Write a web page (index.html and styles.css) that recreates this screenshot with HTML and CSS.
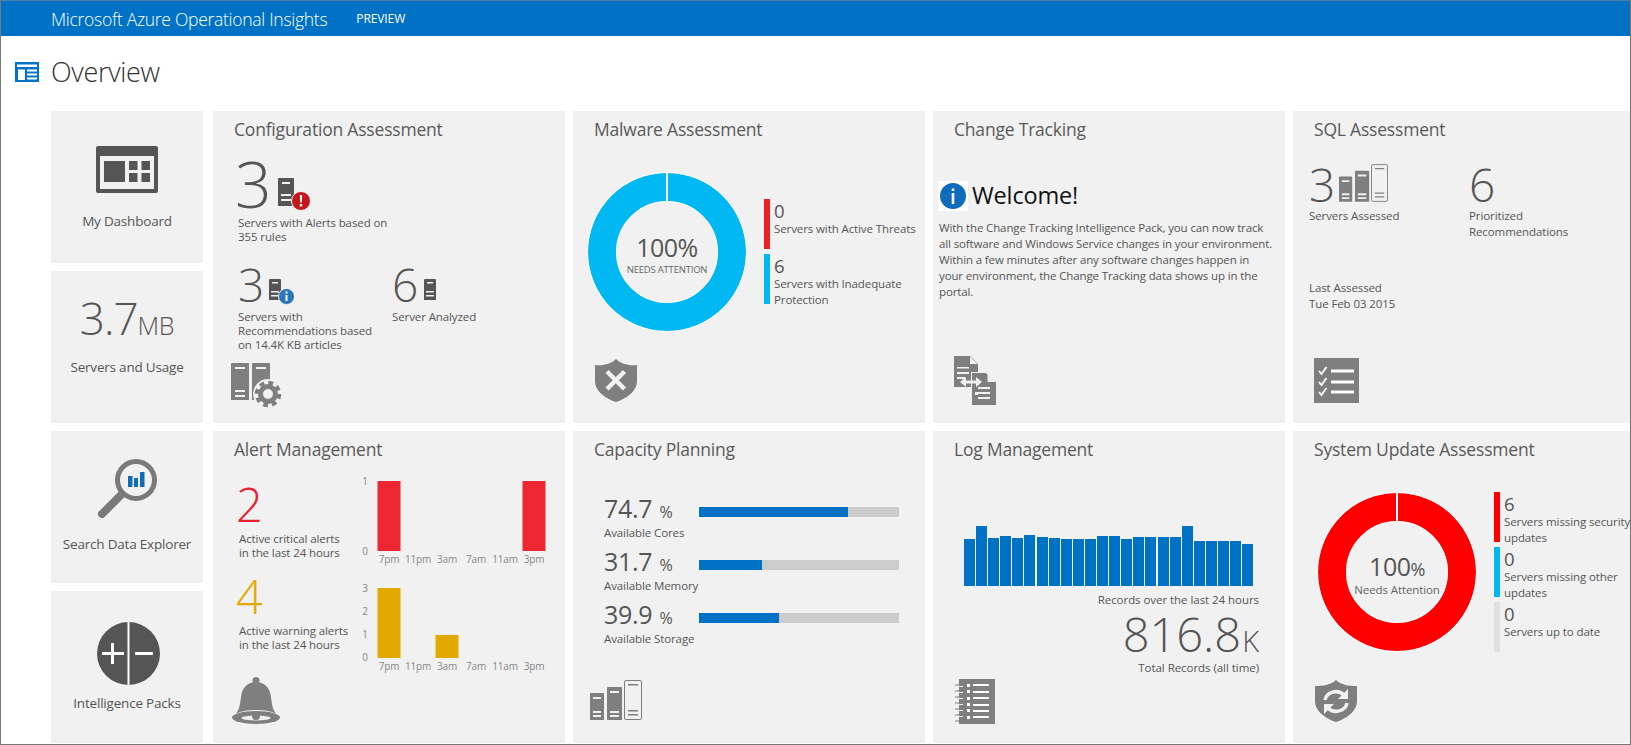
FILE: index.html
```html
<!DOCTYPE html>
<html lang="en">
<head>
<meta charset="utf-8">
<title>Microsoft Azure Operational Insights</title>
<link rel="stylesheet" href="styles.css">
</head>
<body>
<svg class="defs" width="0" height="0" aria-hidden="true">
  <symbol id="racks" viewBox="0 0 52 40">
    <path class="g" d="M1 13h12a1 1 0 011 1v26H0V14a1 1 0 011-1zM18 7h13a1 1 0 011 1v32H17V8a1 1 0 011-1z"/>
    <path class="w" d="M3 17h8v2H3zM3 31h8v2H3zM3 35h8v2H3zM20 11h9v2h-9zM20 31h9v2h-9zM20 35h9v2h-9z"/>
    <rect x="34.5" y=".5" width="17" height="39" rx="1.5" fill="none" stroke="#7f7f7f"/>
    <path class="g" d="M38 4h10v1.5H38zM38 30h10v1.5H38zM38 34h10v1.5H38z"/>
  </symbol>
</svg>
<div class="window">
  <header class="topbar">
    <span class="brand">Microsoft Azure Operational Insights</span>
    <span class="preview">PREVIEW</span>
  </header>
  <div class="page-head">
    <svg class="page-icon" width="24" height="20" viewBox="0 0 24 20">
      <path fill="#0072c6" d="M0 0h24v20H0z"/>
      <path fill="#fff" d="M2 2.500h20V5H2zM3 7.500h7V18H3zM12 7.500h10v2H12zM12 11.500h10v2H12zM12 15.500h10v2H12z"/>
    </svg>
    <h1 class="page-title">Overview</h1>
  </div>
  <main class="board">
    <div class="side">
      <a class="nav-tile nav-dash">
        <svg width="62" height="47" viewBox="0 0 62 47">
          <rect width="62" height="47" rx="2" fill="#555"/>
          <path fill="#f1f1f1" d="M4 10h54v33H4z"/>
          <path fill="#555" d="M8 15h21v21H8zM33 15h8.500v9H33zM45.500 15H54v9h-8.500zM33 27h8.500v9H33zM45.500 27H54v9h-8.500z"/>
        </svg>
        <span class="nav-label dash-label">My Dashboard</span>
      </a>
      <a class="nav-tile nav-usage">
        <span class="usage"><span class="usage-num">3.7</span><span class="usage-unit">MB</span></span>
        <span class="nav-label usage-label">Servers and Usage</span>
      </a>
    </div>
    <section class="tile">
      <h2 class="tile-title">Configuration Assessment</h2>
      <div class="cfg-top">
        <span class="num-xl">3</span>
        <svg class="cfg-badge-lg" width="32" height="33" viewBox="0 0 32 33">
          <path fill="#555" d="M1 0h14a1 1 0 011 1v27H0V1a1 1 0 011-1z"/>
          <path fill="#f1f1f1" d="M4 4h8v2H4zM3 16h10v2H3zM3 21h10v2H3z"/>
          <circle cx="23" cy="23" r="9.500" fill="#c4161c" stroke="#f1f1f1"/>
          <path fill="#fff" d="M21.800 17h2.400l-.4 7.500h-1.600zM21.800 26h2.400v2.400h-2.400z"/>
        </svg>
      </div>
      <p class="desc cfg-desc">Servers with Alerts based on<br>355 rules</p>
      <div class="cfg-row">
        <div class="cfg-col">
          <div class="cfg-stat">
            <span class="num-lg">3</span>
            <svg class="cfg-badge-sm" width="26" height="26" viewBox="0 0 26 26">
              <path fill="#555" d="M1 0h10a1 1 0 011 1v20H0V1a1 1 0 011-1z"/>
              <path fill="#f1f1f1" d="M3 3h6v1.500H3zM2 12h8v1.500H2zM2 16h8v1.500H2z"/>
              <circle cx="17.500" cy="17.500" r="8" fill="#2a75bb" stroke="#f1f1f1"/>
              <path fill="#fff" d="M16.500 12.500h2v2h-2zM16.500 16h2v6h-2z"/>
            </svg>
          </div>
          <p class="desc">Servers with<br>Recommendations based<br>on 14.4K KB articles</p>
        </div>
        <div class="cfg-col-b">
          <div class="cfg-stat">
            <span class="num-lg">6</span>
            <svg class="cfg-badge-plain" width="12" height="21" viewBox="0 0 12 21">
              <path fill="#555" d="M1 0h10a1 1 0 011 1v20H0V1a1 1 0 011-1z"/>
              <path fill="#f1f1f1" d="M3 3h6v1.500H3zM2 12h8v1.500H2zM2 16h8v1.500H2z"/>
            </svg>
          </div>
          <p class="desc">Server Analyzed</p>
        </div>
      </div>
      <svg class="tile-icon ic-config" width="54" height="45" viewBox="0 0 54 45">
        <path fill="#7f7f7f" d="M1 0h16a1 1 0 011 1v36H0V1a1 1 0 011-1zM22 0h16a1 1 0 011 1v36H21V1a1 1 0 011-1z"/>
        <path fill="#f1f1f1" d="M4 4h10v2H4zM25 4h10v2H25zM4 27h10v2H4zM4 32h10v2H4z"/>
        <circle cx="37" cy="31" r="15" fill="#f1f1f1"/>
        <circle cx="37" cy="31" r="11" fill="none" stroke="#7f7f7f" stroke-width="4.500" stroke-dasharray="4.640 4"/>
        <circle cx="37" cy="31" r="7.500" fill="none" stroke="#7f7f7f" stroke-width="5"/>
      </svg>
    </section>
    <section class="tile">
      <h2 class="tile-title">Malware Assessment</h2>
      <div class="donut-row">
        <div class="donut">
          <svg class="donut-ring" width="160" height="160" viewBox="0 0 160 160">
            <circle cx="80" cy="80" r="65" fill="none" stroke="#00b9f2" stroke-width="28"/>
            <circle cx="80" cy="80" r="79.500" fill="none" stroke="#fff" stroke-opacity=".7"/>
            <circle cx="80" cy="80" r="50.500" fill="none" stroke="#fff" stroke-opacity=".7"/>
            <rect x="79" y="0" width="2" height="30" fill="#fff"/>
          </svg>
          <div class="donut-text">
            <span class="donut-num">100%</span>
            <span class="donut-caps">NEEDS ATTENTION</span>
          </div>
        </div>
        <div class="legend legend-malware">
          <div class="leg-item"><i class="leg-bar bar-red"></i><div class="leg-text"><span class="leg-num">0</span><span class="leg-label">Servers with Active Threats</span></div></div>
          <div class="leg-item"><i class="leg-bar bar-cyan"></i><div class="leg-text"><span class="leg-num">6</span><span class="leg-label">Servers with Inadequate<br>Protection</span></div></div>
        </div>
      </div>
      <svg class="tile-icon ic-shield" width="42" height="43" viewBox="0 0 42 43">
        <path fill="#7f7f7f" d="M21 0C16 5 8 7 0 6v16c0 11 12 18 21 21 9-3 21-10 21-21V6c-8 1-16-1-21-6z"/>
        <path stroke="#f1f1f1" stroke-width="4.500" d="M12 12.500l17.500 17.500M29.500 12.500L12 30"/>
      </svg>
    </section>
    <section class="tile">
      <h2 class="tile-title">Change Tracking</h2>
      <div class="welcome">
        <span class="info-box">
          <svg width="26" height="26" viewBox="0 0 26 26">
            <circle cx="13" cy="13" r="13" fill="#0f6cbd"/>
            <path fill="#fff" d="M11.700 5.500h2.600v2.600h-2.600zM11.700 10h2.600v11h-2.600z"/>
          </svg>
        </span>
        <span class="welcome-text">Welcome!</span>
      </div>
      <p class="para">With the Change Tracking Intelligence Pack, you can now track<br>all software and Windows Service changes in your environment.<br>Within a few minutes after any software changes happen in<br>your environment, the Change Tracking data shows up in the<br>portal.</p>
      <svg class="tile-icon ic-docs" width="43" height="49" viewBox="0 0 43 49">
        <path fill="#7f7f7f" d="M0 0h16l8 8v23H0z"/>
        <path fill="#f1f1f1" d="M16 .500v7.500h7.500z"/>
        <path fill="#f1f1f1" d="M3 11h12v1.500H3zM3 16h12v2H3zM3 21h8v2H3z"/>
        <path fill="#f1f1f1" d="M17 16h15l11 10v23H17z"/>
        <path fill="#7f7f7f" d="M18 17h14l10 9v23H18z"/>
        <path fill="#f1f1f1" d="M33.500 17.500V26h8.500z"/>
        <path fill="#f1f1f1" d="M24 31h12v2H24zM21 36h3v3h-3zM24 36h12v2H24zM24 41h12v2H24z"/>
        <path fill="#f1f1f1" d="M6 26l6-5v3.500h10V21l6 5-6 5v-3.500H12V31z"/>
      </svg>
    </section>
    <section class="tile">
      <h2 class="tile-title">SQL Assessment</h2>
      <div class="sql-grid">
        <div class="sql-cell">
          <div class="sql-stat">
            <span class="num-lg">3</span>
            <svg class="sql-racks" width="49" height="38"><use href="#racks"/></svg>
          </div>
          <p class="desc16">Servers Assessed</p>
        </div>
        <div class="sql-cell">
          <div class="sql-stat"><span class="num-lg">6</span></div>
          <p class="desc16">Prioritized<br>Recommendations</p>
        </div>
      </div>
      <p class="desc16 sql-last">Last Assessed<br>Tue Feb 03 2015</p>
      <svg class="tile-icon ic-check" width="45" height="45" viewBox="0 0 45 45">
        <path fill="#7f7f7f" d="M0 0h45v45H0z"/>
        <path fill="#fff" d="M17 11.500h23v3H17zM17 22.500h23v3H17zM17 32.500h23v3H17z"/>
        <path fill="none" stroke="#fff" stroke-width="1.800" d="M5 13l2.500 3L12.500 9M5 24l2.500 3 5-7M5 34l2.500 3 5-7"/>
      </svg>
    </section>

    <div class="side">
      <a class="nav-tile nav-search">
        <svg width="60" height="60" viewBox="0 0 60 60">
          <circle cx="39" cy="21" r="18.500" fill="#f1f1f1" stroke="#7a7a7a" stroke-width="5"/>
          <path stroke="#7a7a7a" stroke-width="8" stroke-linecap="round" d="M24 36L5 55"/>
          <path fill="#0f6cb5" d="M31 17h4.500v11H31zM37 19h4v9h-4zM43 13h4.500v15H43z"/>
        </svg>
        <span class="nav-label search-label">Search Data Explorer</span>
      </a>
      <a class="nav-tile nav-packs">
        <svg class="packs-icon" width="63" height="63" viewBox="0 0 63 63">
          <circle cx="31.500" cy="31.500" r="31.500" fill="#555"/>
          <path fill="#fff" d="M30.500 0h2v63h-2zM14 21h3v9h10v3H17v9h-3V33H5v-3h9zM38 30h18v3H38z"/>
        </svg>
        <span class="nav-label packs-label">Intelligence Packs</span>
      </a>
    </div>
    <section class="tile">
      <h2 class="tile-title">Alert Management</h2>
      <div class="alert-row alert-row-a">
        <div class="alert-stat alert-stat-a">
          <span class="num-alert red">2</span>
          <p class="desc alert-desc">Active critical alerts<br>in the last 24 hours</p>
        </div>
        <svg class="chart" width="192" height="94" viewBox="0 0 192 94">
          <g class="ax">
            <text x="5" y="11">1</text><text x="5" y="81">0</text>
            <text x="29" y="89">7pm</text><text x="58" y="89">11pm</text><text x="87" y="89">3am</text><text x="116" y="89">7am</text><text x="145" y="89">11am</text><text x="174" y="89">3pm</text>
          </g>
          <rect x="17.500" y="7" width="23" height="70" fill="#ee2733"/>
          <rect x="162.500" y="7" width="23" height="70" fill="#ee2733"/>
        </svg>
      </div>
      <div class="alert-row alert-row-b">
        <div class="alert-stat">
          <span class="num-alert amber">4</span>
          <p class="desc alert-desc">Active warning alerts<br>in the last 24 hours</p>
        </div>
        <svg class="chart" width="192" height="100" viewBox="0 0 192 100">
          <g class="ax">
            <text x="5" y="18">3</text><text x="5" y="41">2</text><text x="5" y="64">1</text><text x="5" y="87">0</text>
            <text x="29" y="96">7pm</text><text x="58" y="96">11pm</text><text x="87" y="96">3am</text><text x="116" y="96">7am</text><text x="145" y="96">11am</text><text x="174" y="96">3pm</text>
          </g>
          <rect x="17.500" y="14" width="23" height="70" fill="#e2a900"/>
          <rect x="75.500" y="61" width="23" height="23" fill="#e2a900"/>
        </svg>
      </div>
      <svg class="tile-icon ic-bell" width="48" height="47" viewBox="0 0 48 47">
        <ellipse cx="24" cy="40.500" rx="24" ry="6.500" fill="#7f7f7f"/>
        <ellipse cx="24" cy="41" rx="14.500" ry="2.500" fill="#f1f1f1"/>
        <circle cx="24" cy="3.500" r="3.500" fill="#7f7f7f"/>
        <path fill="#7f7f7f" d="M24 5c-8 0-13 5-14.500 12-1.500 8-1 14-5.500 19.500 5-2.500 12-3.500 20-3.500s15 1 20 3.500C39.500 31 40 25 38.500 17 37 10 32 5 24 5z"/>
        <circle cx="24" cy="39" r="4" fill="#7f7f7f"/>
      </svg>
    </section>
    <section class="tile">
      <h2 class="tile-title">Capacity Planning</h2>
      <div class="capacity">
        <div class="cap-row">
          <div class="cap-text"><span class="cap-val"><span class="cap-num">74.7</span> <span class="cap-pct">%</span></span><span class="cap-label">Available Cores</span></div>
          <div class="track"><div class="fill" style="width:74.7%"></div></div>
        </div>
        <div class="cap-row">
          <div class="cap-text"><span class="cap-val"><span class="cap-num">31.7</span> <span class="cap-pct">%</span></span><span class="cap-label">Available Memory</span></div>
          <div class="track"><div class="fill" style="width:31.7%"></div></div>
        </div>
        <div class="cap-row">
          <div class="cap-text"><span class="cap-val"><span class="cap-num">39.9</span> <span class="cap-pct">%</span></span><span class="cap-label">Available Storage</span></div>
          <div class="track"><div class="fill" style="width:39.9%"></div></div>
        </div>
      </div>
      <svg class="tile-icon ic-racks" width="52" height="40"><use href="#racks"/></svg>
    </section>
    <section class="tile">
      <h2 class="tile-title">Log Management</h2>
      <div class="log-chart">
        <i class="log-bar" style="height:47px"></i><i class="log-bar" style="height:60px"></i><i class="log-bar" style="height:48px"></i><i class="log-bar" style="height:50px"></i><i class="log-bar" style="height:48px"></i><i class="log-bar" style="height:51px"></i><i class="log-bar" style="height:49px"></i><i class="log-bar" style="height:48px"></i><i class="log-bar" style="height:47px"></i><i class="log-bar" style="height:47px"></i><i class="log-bar" style="height:47px"></i><i class="log-bar" style="height:50px"></i><i class="log-bar" style="height:50px"></i><i class="log-bar" style="height:47px"></i><i class="log-bar" style="height:49px"></i><i class="log-bar" style="height:49px"></i><i class="log-bar" style="height:49px"></i><i class="log-bar" style="height:49px"></i><i class="log-bar" style="height:60px"></i><i class="log-bar" style="height:45px"></i><i class="log-bar" style="height:45px"></i><i class="log-bar" style="height:45px"></i><i class="log-bar" style="height:45px"></i><i class="log-bar" style="height:42px"></i>
      </div>
      <div class="log-info">
        <span class="log-cap">Records over the last 24 hours</span>
        <span class="log-total"><span class="log-num">816.8</span><span class="log-unit">K</span></span>
        <span class="log-cap log-cap-b">Total Records (all time)</span>
      </div>
      <svg class="tile-icon ic-notes" width="40" height="45" viewBox="0 0 40 45">
        <path fill="#7f7f7f" d="M4 0h36v45H4z"/>
        <path fill="#fff" d="M12 5h3v3h-3zM18 5h16v2H18zM12 11h3v3h-3zM18 12h16v2H18zM12 18h3v3h-3zM18 18h16v2H18zM12 24h3v3h-3zM18 25h16v2H18zM12 30h3v3h-3zM18 31h16v2H18zM12 37h3v3h-3zM18 37h16v2H18z"/>
        <path fill="none" stroke="#7f7f7f" stroke-width="1.200" d="M0 6h7M0 12h7M0 18h7M0 24h7M0 30h7M0 36h7M0 42h7"/>
        <path fill="none" stroke="#f1f1f1" stroke-width="1" d="M4 7.500h4M4 13.500h4M4 19.500h4M4 25.500h4M4 31.500h4M4 37.500h4"/>
      </svg>
    </section>
    <section class="tile">
      <h2 class="tile-title">System Update Assessment</h2>
      <div class="donut-row">
        <div class="donut donut-update">
          <svg class="donut-ring" width="160" height="160" viewBox="0 0 160 160">
            <circle cx="80" cy="80" r="65" fill="none" stroke="#f00" stroke-width="28"/>
            <circle cx="80" cy="80" r="79.500" fill="none" stroke="#fff" stroke-opacity=".7"/>
            <circle cx="80" cy="80" r="50.500" fill="none" stroke="#fff" stroke-opacity=".7"/>
            <rect x="79" y="0" width="2" height="30" fill="#fff"/>
          </svg>
          <div class="donut-text donut-text-up">
            <span class="donut-num">100<small class="donut-pct">%</small></span>
            <span class="donut-sub">Needs Attention</span>
          </div>
        </div>
        <div class="legend">
          <div class="leg-item"><i class="leg-bar bar-pure"></i><div class="leg-text"><span class="leg-num">6</span><span class="leg-label">Servers missing security<br>updates</span></div></div>
          <div class="leg-item"><i class="leg-bar bar-cyan"></i><div class="leg-text"><span class="leg-num">0</span><span class="leg-label">Servers missing other<br>updates</span></div></div>
          <div class="leg-item"><i class="leg-bar bar-grey"></i><div class="leg-text"><span class="leg-num">0</span><span class="leg-label">Servers up to date</span></div></div>
        </div>
      </div>
      <svg class="tile-icon ic-update" width="42" height="42" viewBox="0 0 42 42">
        <path fill="#7f7f7f" d="M21 0C16 5 8 6 0 6v15c0 11 12 18 21 21 9-3 21-10 21-21V6c-8 0-16-1-21-6z"/>
        <path fill="none" stroke="#f1f1f1" stroke-width="3.500" d="M10 20a11 10 0 0119-5M32 23a11 10 0 01-19 5"/>
        <path fill="#f1f1f1" d="M33 9v10h-10zM9 34V24h10z"/>
      </svg>
    </section>
  </main>
</div>
</body>
</html>
```
FILE: styles.css
```css
* { box-sizing: border-box; }
html, body { margin: 0; padding: 0; height: 100%; overflow: hidden; background: #fff; }
body { font-family: "Open Sans", "Noto Sans", "Liberation Sans", sans-serif; color: #555; }
.defs { position: absolute; }
.g { fill: #7f7f7f; }
.w { fill: #f1f1f1; }
.window {
  width: 1631px; height: 745px; overflow: hidden;
  border: 1px solid #777; border-top-color: #4f7ea8; background: #fff;
}
.topbar {
  height: 35px; background: #0072c6; color: #fff;
  display: flex; align-items: center; padding-left: 50px;
}
.brand { font-size: 17.500px; font-weight: 300; letter-spacing: -.28px; }
.preview { font-size: 12px; margin-left: 29px; letter-spacing: -.1px; }
.page-head { display: flex; align-items: center; height: 36px; margin-top: 18px; padding-left: 14px; }
.page-icon { flex: none; }
.page-title { margin: 0 0 0 12px; font-size: 27px; font-weight: 300; color: #333; line-height: 36px; letter-spacing: -.3px; }
.board {
  display: grid; grid-template-columns: 154px repeat(4, 352px);
  grid-auto-rows: 312px; column-gap: 8px; row-gap: 8px;
  margin: 21px 0 0 50px; width: 1640px;
}
.side { display: flex; flex-direction: column; gap: 8px; width: 152px; }
.nav-tile { height: 152px; background: #f1f1f1; display: flex; flex-direction: column; align-items: center; }
.nav-label { font-size: 13.5px; line-height: 20px; color: #555; letter-spacing: -.2px; }
.nav-dash { padding-top: 35px; }
.dash-label { margin-top: 18px; }
.nav-usage { padding-top: 22px; }
.usage { line-height: 50px; height: 50px; display: flex; align-items: baseline; font-weight: 300; }
.usage-num { font-size: 44px; letter-spacing: -1px; }
.usage-unit { font-size: 25px; margin-left: 0; letter-spacing: -.3px; }
.usage-label { margin-top: 14px; }
.nav-search { padding-top: 28px; }
.search-label { margin-top: 15px; }
.nav-packs { padding-top: 31px; }
.packs-icon { margin-left: 3px; }
.packs-label { margin-top: 8px; }

.tile { background: #f1f1f1; display: flex; flex-direction: column; min-width: 0; overflow: hidden; }
.tile-title { margin: 6px 0 1px 21px; font-size: 17.500px; font-weight: 400; line-height: 24px; color: #5a5a5a; letter-spacing: -.2px; white-space: nowrap; }
.tile-icon { margin-top: auto; flex: none; }
.desc { margin: 0; font-size: 11.5px; line-height: 14px; color: #555; white-space: nowrap; letter-spacing: -.1px; }
.desc16 { margin: 0; font-size: 11.5px; line-height: 16px; color: #555; white-space: nowrap; letter-spacing: -.1px; }

.cfg-top { display: flex; height: 62px; margin: 12px 0 0 22px; }
.num-xl { font-size: 64px; line-height: 60px; font-weight: 300; }
.cfg-badge-lg { margin: 24px 0 0 6px; }
.cfg-desc { margin-left: 25px; }
.cfg-row { display: flex; margin: 18px 0 0 25px; }
.cfg-col { width: 154px; }
.cfg-stat { display: flex; height: 44px; margin-bottom: 4px; }
.num-lg { font-size: 46px; line-height: 44px; font-weight: 300; }
.cfg-badge-sm { margin: 17px 0 0 5px; }
.cfg-badge-plain { margin: 17px 0 0 6px; }
.ic-config { margin-left: 18px; margin-bottom: 15px; }

.donut-row { display: flex; align-items: flex-start; margin-top: 30px; }
.donut { display: grid; width: 160px; height: 160px; margin-left: 14px; flex: none; }
.donut-update { margin-left: 24px; }
.donut-ring, .donut-text { grid-area: 1 / 1; }
.donut-text { display: flex; flex-direction: column; align-items: center; padding-top: 60px; }
.donut-text-up { padding-top: 59px; }
.donut-num { font-size: 25px; line-height: 30px; color: #555; font-weight: 400; letter-spacing: -.5px; }
.donut-caps { font-size: 9.5px; line-height: 14px; margin-top: 1px; letter-spacing: -.2px; color: #666; }
.donut-pct { font-size: 18px; }
.donut-sub { font-size: 11.5px; line-height: 14px; margin-top: -1px; color: #666; letter-spacing: -.1px; }
.legend { display: flex; flex-direction: column; gap: 5px; margin-left: 17px; }
.legend-malware { margin-top: 27px; }
.leg-item { display: flex; height: 50px; }
.leg-bar { display: block; width: 6px; height: 50px; flex: none; }
.bar-red { background: #ed2024; }
.bar-cyan { background: #00b9f2; }
.bar-pure { background: #f00; }
.bar-grey { background: #e0e0e0; }
.leg-text { margin-left: 4px; padding-top: 2px; white-space: nowrap; }
.leg-num { display: block; font-size: 18.500px; line-height: 20px; color: #555; }
.leg-label { display: block; font-size: 11.5px; line-height: 16px; color: #555; letter-spacing: -.1px; }
.ic-shield { margin-left: 22px; margin-bottom: 21px; }

.welcome { display: flex; align-items: center; margin: 39px 0 0 5px; height: 30px; }
.info-box { width: 30px; height: 30px; background: #fff; display: flex; align-items: center; justify-content: center; }
.welcome-text { font-size: 23.500px; line-height: 26px; margin-left: 4px; margin-bottom: 3px; color: #111; letter-spacing: -.15px; }
.para { margin: 9px 0 0 6px; font-size: 11.5px; line-height: 16px; color: #555; white-space: nowrap; letter-spacing: -.13px; }
.ic-docs { margin-left: 21px; margin-bottom: 18px; }

.sql-grid { display: grid; grid-template-columns: 160px 1fr; margin: 20px 0 0 16px; }
.sql-stat { display: flex; height: 44px; margin-bottom: 2px; }
.sql-racks { margin: 2px 0 0 4px; }
.sql-last { margin: 40px 0 0 16px; }
.ic-check { margin-left: 21px; margin-bottom: 20px; }

.alert-row { display: flex; }
.alert-row-a { margin-top: 12px; height: 94px; }
.alert-row-b { margin-top: 6px; height: 100px; }
.alert-stat { width: 147px; padding-left: 26px; flex: none; }
.alert-stat-a { padding-top: 8px; }
.num-alert { display: block; font-size: 47px; line-height: 44px; font-weight: 300; margin-left: -3px; }
.red { color: #e8212e; }
.amber { color: #e2a900; }
.alert-desc { margin-top: 6px; }
.chart { flex: none; }
.ax text { font-size: 10px; fill: #888; text-anchor: middle; letter-spacing: -.2px; }
.ic-bell { margin-left: 19px; margin-bottom: 19px; }

.capacity { margin: 31px 0 0 31px; }
.cap-row { display: flex; height: 53px; }
.cap-text { width: 95px; flex: none; white-space: nowrap; }
.cap-val { display: block; height: 30px; line-height: 30px; }
.cap-num { font-size: 25px; color: #555; letter-spacing: -.3px; }
.cap-pct { font-size: 16px; color: #555; margin-left: 3px; }
.cap-label { display: block; margin-top: 2px; font-size: 11.5px; line-height: 16px; color: #555; letter-spacing: -.1px; }
.track { width: 200px; height: 10px; margin-top: 14px; background: #ccc; }
.fill { height: 10px; background: #0072c6; }
.ic-racks { margin-left: 17px; margin-bottom: 23px; }

.log-chart { display: flex; align-items: flex-end; gap: 1.100px; height: 60px; margin: 64px 0 0 31px; width: 289px; }
.log-bar { display: block; flex: 1; background: #0072c6; }
.log-info { display: flex; flex-direction: column; align-items: flex-end; padding-right: 26px; margin-top: 6px; white-space: nowrap; }
.log-cap { font-size: 11.5px; line-height: 16px; color: #555; letter-spacing: -.05px; }
.log-cap-b { margin-top: 4px; }
.log-total { display: flex; align-items: baseline; line-height: 44px; height: 44px; margin-top: 4px; }
.log-num { font-size: 47px; font-weight: 300; }
.log-unit { font-size: 29px; font-weight: 300; margin-left: 1px; }
.ic-notes { margin-left: 22px; margin-bottom: 19px; }
.ic-update { margin-left: 22px; margin-bottom: 21px; }
```
